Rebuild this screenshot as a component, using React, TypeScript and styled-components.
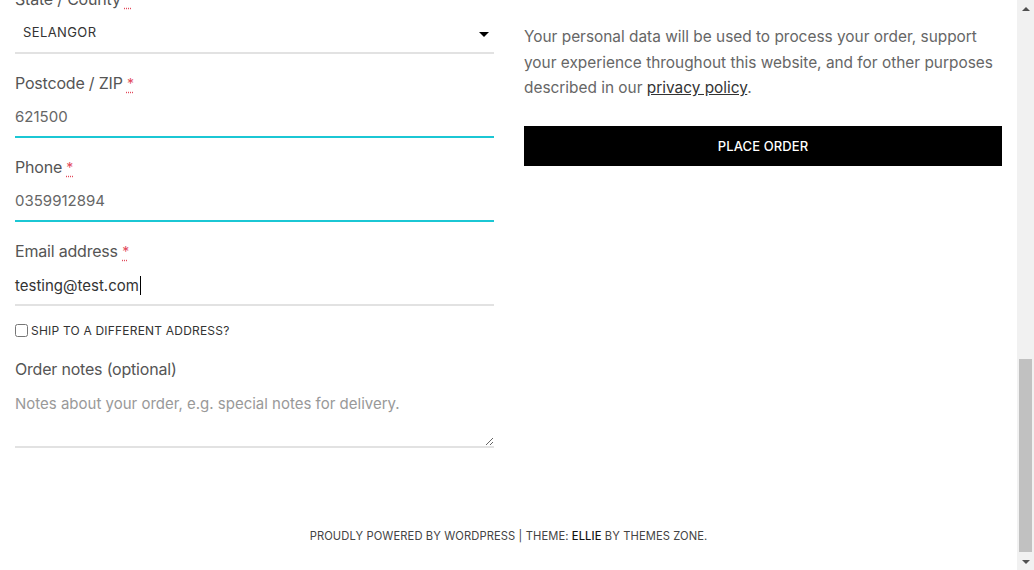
import React from 'react'
import styled, { createGlobalStyle } from 'styled-components'

const GlobalStyle = createGlobalStyle`
  html, body {
    margin: 0;
    padding: 0;
    background: #fff;
    overflow: hidden;
  }
  body {
    font-family: Inter, 'Open Sans', sans-serif;
    color: #555;
  }
`

const Page = styled.div`
  display: flex;
  width: 1034px;
  height: 570px;
  overflow: hidden;
`

const Main = styled.div`
  flex: 1;
  display: flex;
  flex-direction: column;
  min-width: 0;
`

const Columns = styled.div`
  display: grid;
  grid-template-columns: 479px 478px;
  column-gap: 30px;
  padding: 0 15px;
  margin-top: -13px;
`

const Column = styled.div<{ $top?: number }>`
  display: flex;
  flex-direction: column;
  padding-top: ${(p) => p.$top || 0}px;
`

const Field = styled.div`
  display: flex;
  flex-direction: column;
  margin-bottom: 17px;
`

const Label = styled.label`
  display: block;
  font-size: 16px;
  line-height: 24px;
  color: #555;
  letter-spacing: -0.2px;
`

const Required = styled.abbr`
  color: #e2495a;
  text-decoration: underline dotted #e2495a;
  text-underline-offset: 3px;
  font-size: 14px;
`

const Input = styled.input<{ $focus?: boolean }>`
  box-sizing: border-box;
  height: 42px;
  border: none;
  border-bottom: 2px solid ${(p) => (p.$focus ? '#1bc7d4' : '#e2e2e2')};
  padding: 0;
  font-family: inherit;
  font-size: 15px;
  color: #666;
  outline: none;
  background: transparent;
`

const SelectBox = styled.div`
  box-sizing: border-box;
  height: 42px;
  display: flex;
  align-items: center;
  justify-content: space-between;
  padding: 0 5px 0 8px;
  border-bottom: 2px solid #e2e2e2;
  font-size: 13px;
  letter-spacing: 0.4px;
  color: #333;
`

const Caret = styled.span`
  width: 0;
  height: 0;
  border-left: 5px solid transparent;
  border-right: 5px solid transparent;
  border-top: 5px solid #000;
  margin-top: 4px;
`

const TextCursor = styled.span`
  display: inline-block;
  width: 1px;
  height: 19px;
  background: #000;
  margin-left: 1px;
  vertical-align: -4px;
`

const FakeValue = styled.div`
  box-sizing: border-box;
  height: 42px;
  display: flex;
  align-items: center;
  padding-top: 2px;
  border-bottom: 2px solid #e2e2e2;
  font-size: 15px;
  color: #333;
`

const CheckRow = styled.label`
  display: flex;
  align-items: center;
  gap: 3px;
  margin: 0 0 19px;
  font-size: 12px;
  letter-spacing: 0.2px;
  color: #333;
  text-transform: uppercase;
  input {
    margin: 0;
    width: 13px;
    height: 13px;
  }
`

const TextArea = styled.textarea`
  box-sizing: border-box;
  height: 67px;
  border: none;
  border-bottom: 2px solid #e2e2e2;
  padding: 12px 0 0;
  font-family: inherit;
  font-size: 15px;
  line-height: 22px;
  color: #666;
  outline: none;
  resize: vertical;
  &::placeholder {
    color: #999;
  }
`

const Privacy = styled.p`
  margin: 0 0 25px;
  font-size: 15.4px;
  line-height: 25.6px;
  color: #666;
  a {
    color: #333;
    text-decoration: underline;
  }
`

const PlaceOrder = styled.button`
  height: 40px;
  border: none;
  background: #000;
  color: #fff;
  font-family: inherit;
  font-size: 13px;
  font-weight: 500;
  letter-spacing: 0.1px;
  text-transform: uppercase;
  cursor: pointer;
`

const Footer = styled.footer`
  margin-top: 64px;
  text-align: center;
  font-size: 11.2px;
  letter-spacing: 0.1px;
  color: #444;
  text-transform: uppercase;
  b {
    font-weight: 500;
    color: #111;
  }
`

const Scrollbar = styled.div`
  width: 17px;
  background: #f1f1f1;
  display: flex;
  flex-direction: column;
  align-items: center;
`

const Arrow = styled.div<{ $up?: boolean }>`
  height: 17px;
  display: flex;
  align-items: center;
  justify-content: center;
  &::after {
    content: '';
    border-left: 4px solid transparent;
    border-right: 4px solid transparent;
    ${(p) => (p.$up ? 'border-bottom' : 'border-top')}: 4px solid #505050;
  }
`

const Track = styled.div`
  flex: 1;
  width: 100%;
  display: flex;
  flex-direction: column;
  justify-content: flex-end;
  align-items: center;
`

const Thumb = styled.div`
  width: 13px;
  height: 193px;
  margin-bottom: 1px;
  background: #c1c1c1;
`

const Req = () => <Required title="required">*</Required>

export default function App() {
  return (
    <Page>
      <GlobalStyle />
      <Main>
        <Columns>
          <Column>
            <Field>
              <Label>
                State / County <Req />
              </Label>
              <SelectBox>
                SELANGOR
                <Caret />
              </SelectBox>
            </Field>
            <Field>
              <Label>
                Postcode / ZIP <Req />
              </Label>
              <Input $focus defaultValue="621500" />
            </Field>
            <Field>
              <Label>
                Phone <Req />
              </Label>
              <Input $focus defaultValue="0359912894" />
            </Field>
            <Field>
              <Label>
                Email address <Req />
              </Label>
              <FakeValue>
                testing@test.com
                <TextCursor />
              </FakeValue>
            </Field>
            <CheckRow>
              <input type="checkbox" />
              Ship to a different address?
            </CheckRow>
            <Field>
              <Label>Order notes (optional)</Label>
              <TextArea placeholder="Notes about your order, e.g. special notes for delivery." />
            </Field>
          </Column>
          <Column $top={37}>
            <Privacy>
              Your personal data will be used to process your order, support
              your experience throughout this website, and for other purposes
              described in our <a href="#">privacy policy</a>.
            </Privacy>
            <PlaceOrder>Place order</PlaceOrder>
          </Column>
        </Columns>
        <Footer>
          Proudly powered by WordPress | Theme: <b>Ellie</b> by Themes Zone.
        </Footer>
      </Main>
      <Scrollbar>
        <Arrow $up />
        <Track>
          <Thumb />
        </Track>
        <Arrow />
      </Scrollbar>
    </Page>
  )
}
